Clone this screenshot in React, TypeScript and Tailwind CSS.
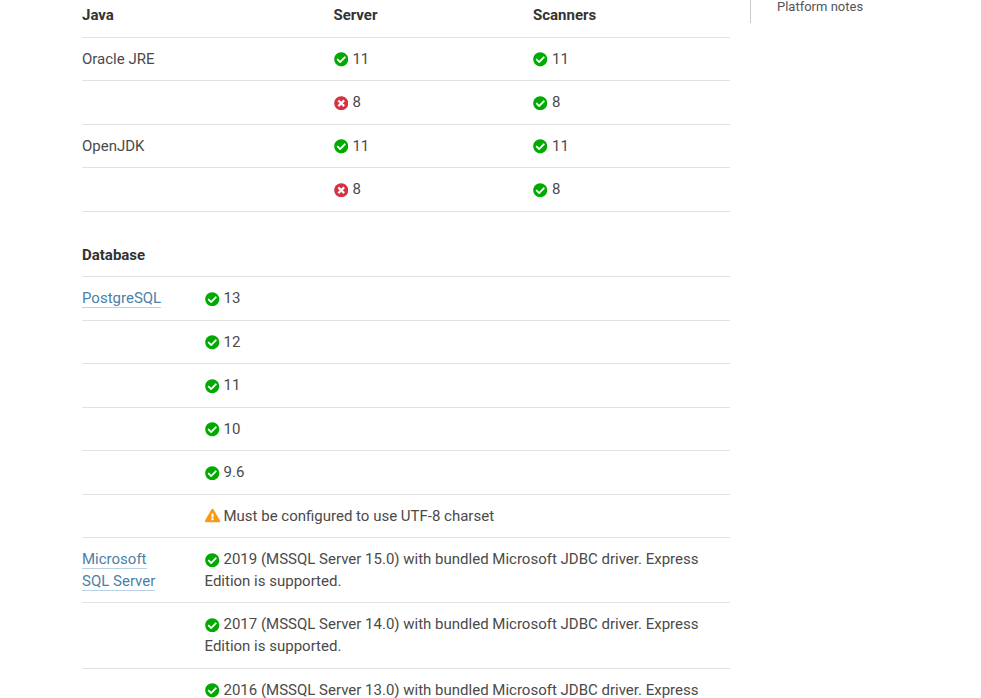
import React from "react";

const Ok = () => (
  <svg viewBox="0 0 512 512" className="inline-block w-[14.5px] h-[14.5px] ml-[0.5px] mr-[4px] align-[-3px]" fill="#00aa00">
    <path d="M504 256c0 137-111 248-248 248S8 393 8 256 119 8 256 8s248 111 248 248zM227.3 387.3l184-184c6.2-6.2 6.2-16.4 0-22.6l-22.6-22.6c-6.2-6.2-16.4-6.2-22.6 0L216 308.1l-70.1-70.1c-6.2-6.2-16.4-6.2-22.6 0l-22.6 22.6c-6.2 6.2-6.2 16.4 0 22.6l104 104c6.2 6.2 16.4 6.2 22.6 0z" />
  </svg>
);
const No = () => (
  <svg viewBox="0 0 512 512" className="inline-block w-[14.5px] h-[14.5px] ml-[0.5px] mr-[4px] align-[-3px]" fill="#d4333f">
    <path d="M256 8C119 8 8 119 8 256s111 248 248 248 248-111 248-248S393 8 256 8zm121.6 313.1c4.7 4.7 4.7 12.3 0 17L338 377.6c-4.7 4.7-12.3 4.7-17 0L256 312l-65.1 65.6c-4.7 4.7-12.3 4.7-17 0L134.4 338c-4.7-4.7-4.7-12.3 0-17l65.6-65-65.6-65.1c-4.7-4.7-4.7-12.3 0-17l39.6-39.6c4.7-4.7 12.3-4.7 17 0l65 65.7 65.1-65.6c4.7-4.7 12.3-4.7 17 0l39.6 39.6c4.7 4.7 4.7 12.3 0 17L312 256l65.6 65.1z" />
  </svg>
);
const Warn = () => (
  <svg viewBox="0 0 576 512" className="inline-block w-[15px] h-[15px] mr-[4px] align-[-2px]" fill="#f79a10">
    <path d="M569.5 440C588 472 564.8 512 527.9 512H48.1c-36.9 0-60-40.1-41.6-72L246.4 24c18.5-32 64.7-32 83.2 0l239.9 416zM288 354c-25.4 0-46 20.6-46 46s20.6 46 46 46 46-20.6 46-46-20.6-46-46-46zm-43.7-165.3l7.4 136c.3 6.4 5.6 11.3 12 11.3h48.5c6.4 0 11.6-5 12-11.3l7.4-136c.4-6.9-5.1-12.7-12-12.7h-63.4c-6.9 0-12.4 5.8-12 12.7z" />
  </svg>
);
const A = ({ children }: { children: React.ReactNode }) => (
  <a className="text-[#4b7fa8] border-b border-[#b9d3e6]">{children}</a>
);

const cell = "pt-[11px] pb-[9.75px] px-0 align-top font-normal text-left";
const row = "border-b border-[#e2e2e2]";

const java: [string, React.ReactNode, string, React.ReactNode, string][] = [
  ["Oracle JRE", <Ok />, "11", <Ok />, "11"],
  ["", <No />, "8", <Ok />, "8"],
  ["OpenJDK", <Ok />, "11", <Ok />, "11"],
  ["", <No />, "8", <Ok />, "8"],
];

const db: [React.ReactNode, React.ReactNode, string][] = [
  [<A>PostgreSQL</A>, <Ok />, "13"],
  ["", <Ok />, "12"],
  ["", <Ok />, "11"],
  ["", <Ok />, "10"],
  ["", <Ok />, "9.6"],
  ["", <Warn />, "Must be configured to use UTF-8 charset"],
  [
    <>
      <A>Microsoft</A>
      <br />
      <A>SQL Server</A>
    </>,
    <Ok />,
    "2019 (MSSQL Server 15.0) with bundled Microsoft JDBC driver. Express Edition is supported.",
  ],
  ["", <Ok />, "2017 (MSSQL Server 14.0) with bundled Microsoft JDBC driver. Express Edition is supported."],
  ["", <Ok />, "2016 (MSSQL Server 13.0) with bundled Microsoft JDBC driver. Express Edition is supported."],
];

export default function App() {
  return (
    <div className="h-[698px] overflow-hidden bg-white font-['Roboto',sans-serif] text-[15px] leading-[21.75px] text-[#4a4a4a]">
      <div className="flex items-start pl-[82px]">
        <main className="w-[648px] -mt-[6px]">
          <table className="w-full table-fixed border-collapse">
            <colgroup>
              <col className="w-[251.4px]" />
              <col className="w-[199.6px]" />
              <col />
            </colgroup>
            <thead>
              <tr className={row}>
                <th className={`${cell} !font-bold text-[#333333]`}>Java</th>
                <th className={`${cell} !font-bold text-[#333333]`}>Server</th>
                <th className={`${cell} !font-bold text-[#333333]`}>Scanners</th>
              </tr>
            </thead>
            <tbody>
              {java.map((r, i) => (
                <tr key={i} className={row}>
                  <td className={cell}>{r[0]}</td>
                  <td className={cell}>
                    {r[1]}
                    {r[2]}
                  </td>
                  <td className={cell}>
                    {r[3]}
                    {r[4]}
                  </td>
                </tr>
              ))}
            </tbody>
          </table>
          <table className="mt-[22px] w-full table-fixed border-collapse">
            <colgroup>
              <col className="w-[122.5px]" />
              <col />
            </colgroup>
            <thead>
              <tr className={row}>
                <th colSpan={2} className={`${cell} !font-bold text-[#333333]`}>
                  Database
                </th>
              </tr>
            </thead>
            <tbody>
              {db.map((r, i) => (
                <tr key={i} className={row}>
                  <td className={cell}>{r[0]}</td>
                  <td className={cell}>
                    {r[1]}
                    {r[2]}
                  </td>
                </tr>
              ))}
            </tbody>
          </table>
        </main>
        <aside className="ml-[20px] h-[23px] border-l border-[#c9ccd1] pl-[26px] text-[13px] leading-[13px] text-[#555555]">
          Platform notes
        </aside>
      </div>
    </div>
  );
}
